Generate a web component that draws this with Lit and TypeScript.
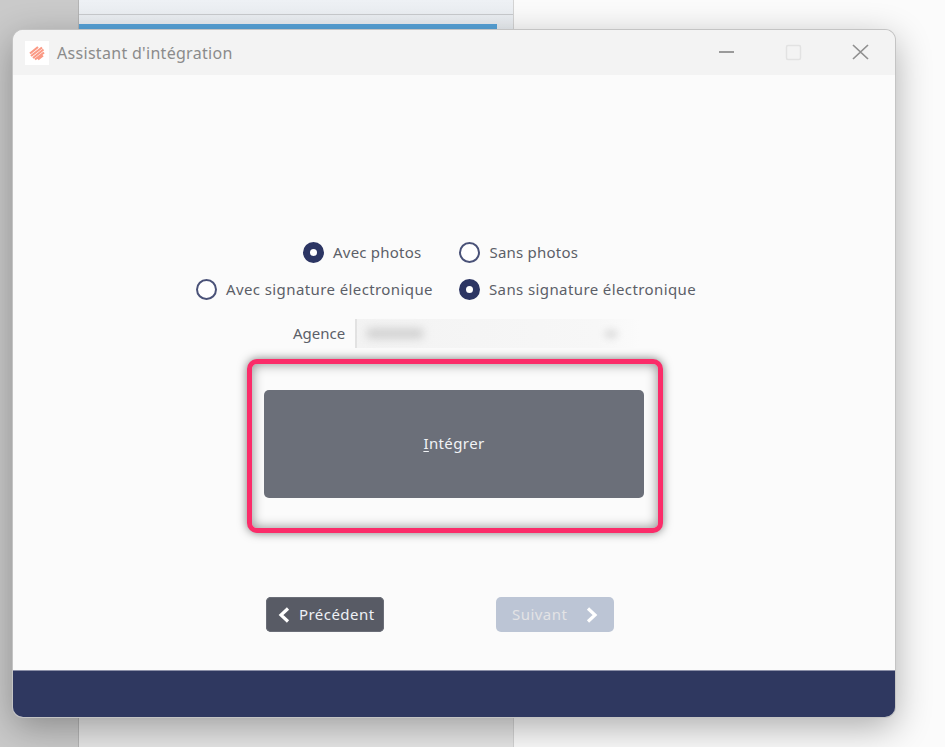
import { LitElement, html, css } from "lit";
import { customElement } from "lit/decorators.js";

@customElement("app-root")
export class AppRoot extends LitElement {
  static styles = css`
    :host { display: block; width: 945px; height: 747px; position: relative; overflow: hidden;
      background: #fbfbfb; font-family: "Noto Sans", sans-serif; }
    .desktop { display: flex; height: 747px; }
    .strip { width: 78px; background: #cacaca; border-right: 1px solid #b4b4b4; }
    .panel { width: 434px; background: linear-gradient(180deg, #eef1f5 0, #e9edf1 30px, #e6e6e6 700px, #e6e6e6 747px);
      border-right: 1px solid #d4d4d4; display: flex; flex-direction: column; }
    .p-a { height: 14px; border-bottom: 1px solid #c9cbce; }
    .p-b { height: 9px; }
    .p-c { height: 6px; margin-right: 16px; background: #58a4da; }
    .rest { flex: 1; }
    .window { position: absolute; left: 13px; top: 30px; width: 882px; height: 687px; box-sizing: border-box;
      border-radius: 10px; background: #fbfbfb; display: flex; flex-direction: column; overflow: hidden;
      box-shadow: 0 0 0 1px #c4c4c4; }
    .shadow { position: absolute; left: 13px; top: 30px; width: 882px; height: 687px; border-radius: 10px;
      box-shadow: 0 10px 36px rgba(0,0,0,.32); }
    .titlebar { height: 45px; flex: none; background: #f3f3f3; display: flex; align-items: center; padding-left: 12px; }
    .logo { width: 24px; height: 24px; background: #fff; display: flex; align-items: center; justify-content: center; margin-right: 8px; }
    .title { font-size: 16px; color: #8b8b8b; letter-spacing: .3px; }
    .winbtns { margin-left: auto; margin-right: 13px; display: flex; align-items: center; }
    .winbtns svg { display: block; }
    .body { flex: 1; display: flex; flex-direction: column; }
    .row { display: flex; align-items: center; height: 20px; }
    .row1 { margin-top: 167px; padding-left: 290px; gap: 38px; }
    .row2 { margin-top: 17px; padding-left: 183px; gap: 26px; }
    .radio { display: flex; align-items: center; gap: 9px; font-size: 15px; color: #5c5f68; letter-spacing: .4px; white-space: nowrap; }
    .row1 .radio { letter-spacing: .22px; }
    .dot { width: 17px; height: 17px; border-radius: 50%; border: 2px solid #4a5278; background: #fff; flex: none; }
    .dot.on { width: 7px; height: 7px; border: 7px solid #2c3563; }
    .agence { display: flex; align-items: center; margin-top: 20px; padding-left: 280px; height: 29px; }
    .agence label { font-size: 15px; color: #5c5f68; width: 62px; position: relative; top: -1px; }
    .combo { width: 285px; height: 29px; box-sizing: border-box; border-left: 2px solid #e2e2e2;
      background: linear-gradient(90deg, #f3f3f3 0, #f7f7f7 85%, #fbfbfb 100%); display: flex; align-items: center; position: relative; }
    .smudge { width: 58px; height: 11px; margin-left: 9px; background: #d2d2d2; border-radius: 6px; filter: blur(4px); }
    .smudge2 { width: 14px; height: 10px; margin-left: auto; margin-right: 22px; background: #e2e2e2; border-radius: 5px; filter: blur(3px); }
    .highlight { margin: 11px 0 0 234px; width: 416px; height: 174px; box-sizing: border-box; border: 5px solid #fb2c69;
      border-radius: 10px; padding: 26px 12px 30px 12px; background: #fbfbfb;
      box-shadow: 0 0 10px rgba(0,0,0,.5), inset 0 0 12px rgba(0,0,0,.45); }
    .big { height: 108px; width: 380px; border-radius: 5px; background: #6b6f79; color: #f1f3f6; font-size: 15px; box-sizing: border-box; padding-bottom: 3px;
      display: flex; align-items: center; justify-content: center; letter-spacing: .4px; }
    .big u { text-underline-offset: 2px; }
    .nav { display: flex; margin: 64px 0 0 253px; gap: 112px; }
    .nbtn { width: 118px; height: 35px; border-radius: 5px; display: flex; align-items: center; box-sizing: border-box; font-size: 15px; gap: 8px; padding-bottom: 2px; letter-spacing: .45px; }
    .nbtn svg { position: relative; top: 1px; }
    .prev { background: #585b65; color: #eef1f6; padding-left: 11px; box-shadow: 0 0 0 1px #6b6e78 inset; }
    .next { background: #bcc5d5; color: #e3e3e5; padding-left: 16px; gap: 18px; }
    .footer { margin-top: auto; height: 46px; background: #2f3860; flex: none; box-shadow: 0 -1px 0 #8c90a8; }
  `;

  render() {
    return html`
      <div class="desktop">
        <div class="strip"></div>
        <div class="panel">
          <div class="p-a"></div><div class="p-b"></div><div class="p-c"></div><div class="rest"></div>
        </div>
      </div>
      <div class="shadow"></div>
      <div class="window">
        <div class="titlebar">
          <div class="logo">
            <svg width="18" height="18" viewBox="0 0 18 18" fill="none" stroke="#fb9a85" stroke-width="2.200">
              <path d="M2 9.500 10 3M3 12 14 3.500M5 14 15.500 5.500M7 15.500 16 8.500M10 15.500 15 11.500" />
            </svg>
          </div>
          <span class="title">Assistant d'intégration</span>
          <div class="winbtns">
            <svg width="168" height="45" viewBox="0 0 168 45" fill="none">
              <path d="M5 22h15" stroke="#9a9a9a" stroke-width="2" />
              <rect x="72.500" y="15.500" width="14" height="14" rx="1.500" stroke="#e2e2e2" stroke-width="1.500" />
              <path d="M139 15 154 29M154 15 139 29" stroke="#8f8f8f" stroke-width="1.700" />
            </svg>
          </div>
        </div>
        <div class="body">
          <div class="row row1">
            <div class="radio"><span class="dot on"></span>Avec photos</div>
            <div class="radio"><span class="dot"></span>Sans photos</div>
          </div>
          <div class="row row2">
            <div class="radio"><span class="dot"></span>Avec signature électronique</div>
            <div class="radio"><span class="dot on"></span>Sans signature électronique</div>
          </div>
          <div class="agence">
            <label>Agence</label>
            <div class="combo"><div class="smudge"></div><div class="smudge2"></div></div>
          </div>
          <div class="highlight">
            <div class="big"><span><u>I</u>ntégrer</span></div>
          </div>
          <div class="nav">
            <div class="nbtn prev">
              <svg width="14" height="18" viewBox="0 0 14 18" fill="none"><path d="M11 2.500 4 9l7 6.500" stroke="#fff" stroke-width="3.200" /></svg>
              Précédent
            </div>
            <div class="nbtn next">
              Suivant
              <svg width="14" height="18" viewBox="0 0 14 18" fill="none"><path d="M3 2.500 10 9l-7 6.500" stroke="#fff" stroke-width="3.200" /></svg>
            </div>
          </div>
          <div class="footer"></div>
        </div>
      </div>
    `;
  }
}
